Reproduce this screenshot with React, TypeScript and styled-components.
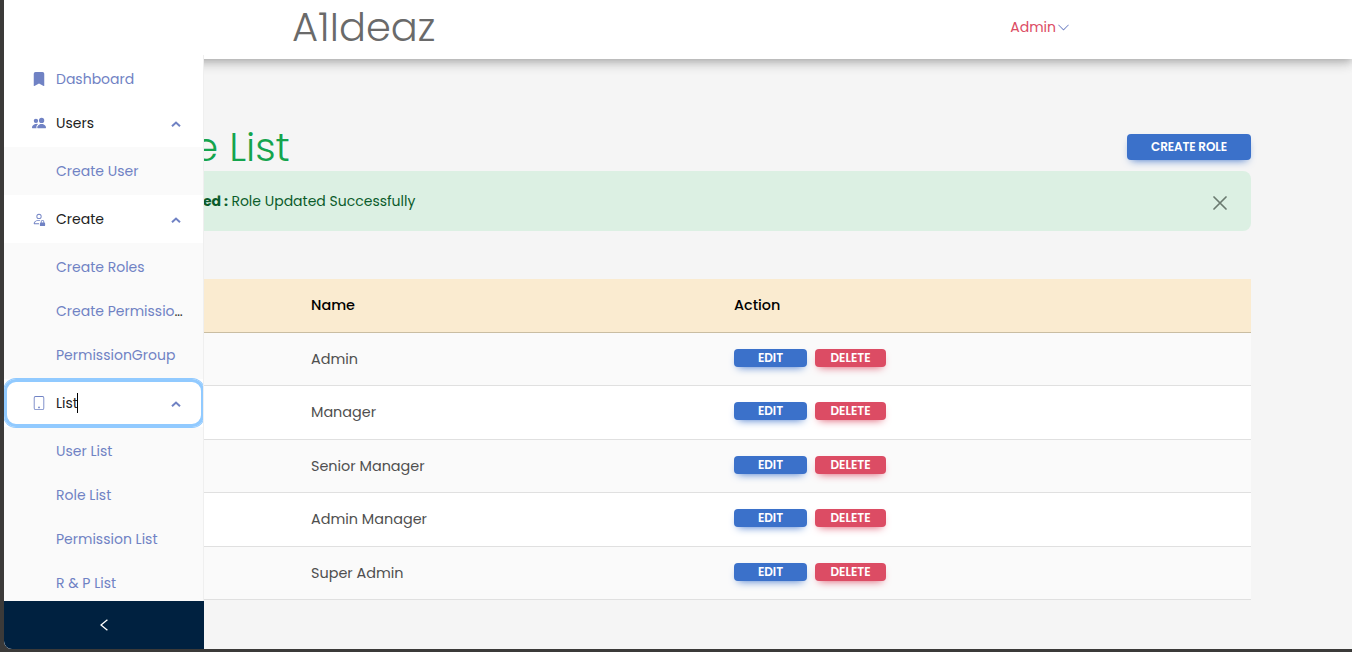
import React from "react";
import styled, { createGlobalStyle, css } from "styled-components";
import { BsBookmarkFill, BsPeopleFill, BsPersonLock, BsTablet, BsChevronDown } from "react-icons/bs";

const GlobalStyle = createGlobalStyle`
  * { box-sizing: border-box; }
  body {
    margin: 0;
    overflow: hidden;
    background: #3b3a39;
    font-family: Poppins, Inter, "Open Sans", sans-serif;
    font-size: 14px;
    color: #4f4f4f;
  }
`;

const Frame = styled.div`
  height: 652px;
  padding: 0 0 3px 4px;
`;

const Screen = styled.div`
  position: relative;
  height: 649px;
  overflow: hidden;
  border-bottom-left-radius: 8px;
  background: #f5f5f5;
`;

/* Top bar */
const Header = styled.header`
  position: relative;
  display: flex;
  justify-content: space-between;
  align-items: center;
  height: 59px;
  padding: 0 282px 5px 288px;
  background: #fff;
  box-shadow: 0 3px 6px -1px rgba(0, 0, 0, 0.12), 0 5px 10px rgba(0, 0, 0, 0.12), 0 2px 15px rgba(0, 0, 0, 0.12);
`;

const Brand = styled.div`
  font-size: 40px;
  font-weight: 300;
  line-height: 48px;
  color: #6a6a6a;
`;

const Account = styled.button`
  display: flex;
  align-items: center;
  padding: 0;
  border: 0;
  background: none;
  font: inherit;
  line-height: 22px;
  color: #dc4c64;
  svg { color: #7082c4; margin-left: 1px; }
`;

/* Page body */
const Content = styled.main`
  width: 1146px;
  margin-left: 101px;
  padding-top: 64px;
`;

const TitleRow = styled.div`
  display: flex;
  justify-content: space-between;
  align-items: center;
  height: 48px;
`;

const Title = styled.h1`
  margin: 0;
  width: 184.8px;
  display: flex;
  justify-content: flex-end;
  font-size: 40px;
  font-weight: 300;
  line-height: 48px;
  white-space: nowrap;
  color: #14a44d;
`;

const Button = styled.button<{ $kind: "primary" | "danger"; $large?: boolean }>`
  display: flex;
  align-items: center;
  justify-content: center;
  padding: 0;
  border: 0;
  border-radius: 4px;
  font: inherit;
  font-size: 12px;
  font-weight: 600;
  letter-spacing: ${(p) => (p.$large ? -0.1 : 0)}px;
  white-space: nowrap;
  color: #fff;
  height: ${(p) => (p.$large ? 26 : 18)}px;
  ${(p) =>
    p.$kind === "primary"
      ? css`
          width: ${p.$large ? 124 : 73}px;
          background: #3b71ca;
          box-shadow: 0 4px 9px -4px #3b71ca;
        `
      : css`
          width: 71px;
          background: #dc4c64;
          box-shadow: 0 4px 9px -4px #dc4c64;
        `}
`;

const Alert = styled.div`
  display: flex;
  align-items: center;
  justify-content: space-between;
  height: 60px;
  padding: 0 24px 0 0;
  border-radius: 8px;
  background: #dcf0e3;
  color: #0b5c2b;
  svg { margin-top: 4px; }
`;

const AlertText = styled.div`
  display: flex;
  align-items: center;
  b { width: 123px; text-align: right; margin-right: 3.4px; }
`;

const Table = styled.div`
  margin-top: 48px;
  font-size: 14.4px;
`;

const Row = styled.div<{ $head?: boolean }>`
  display: grid;
  grid-template-columns: 182px 423px 1fr;
  align-items: center;
  height: 53.4px;
  padding-bottom: 0.4px;
  border-bottom: 1px solid #e0e0e0;
  background: #fff;
  &:nth-child(even) { background: #fafafa; }
  ${(p) =>
    p.$head &&
    css`
      height: 54px;
      padding-bottom: 2px;
      border-color: #c9bda2;
      background: #faebd0;
      color: #000;
      font-weight: 500;
    `}
`;

const Cell = styled.div`
  padding-left: 24px;
  line-height: 22px;
`;

const Actions = styled(Cell)`
  display: flex;
  gap: 8px;
  padding-bottom: 2px;
`;

/* Side menu, floating above the page */
const Sidebar = styled.aside`
  position: absolute;
  left: 0;
  top: 0;
  width: 200px;
  height: 649px;
  display: flex;
  flex-direction: column;
  background: #fff;
`;

const Menu = styled.nav`
  flex: 1;
  min-height: 0;
  overflow: hidden;
  margin-top: 55px;
  padding-top: 4px;
  border-right: 1px solid #efefef;
`;

const MenuItem = styled.a<{ $open?: boolean; $focused?: boolean }>`
  display: flex;
  align-items: center;
  height: ${(p) => (p.$open ? 48 : 40)}px;
  padding: 0 22px 0 28px;
  color: ${(p) => (p.$open ? "#212121" : "#7082c4")};
  background: #fff;
  > svg:first-child { color: #7082c4; margin-right: 10px; flex: none; }
  ${(p) =>
    p.$focused &&
    css`
      position: relative;
      width: 200px;
      margin-right: -1px;
      padding-right: 23px;
      border-radius: 12px;
      box-shadow: inset 0 0 0 3px #91caff, 0 0 0 1px #91caff;
    `}
`;

const SubMenu = styled.div`
  padding: 2px 0;
  background: #fafafa;
`;

const SubItem = styled.a`
  display: block;
  height: 44px;
  padding: 0 15px 0 52px;
  overflow: hidden;
  line-height: 44px;
  color: #7082c4;
  white-space: nowrap;
`;

const Ellipsis = styled.span`
  color: #333;
`;

const Caret = styled.i`
  width: 1px;
  height: 20px;
  margin-left: -1px;
  background: #000;
`;

const Trigger = styled.button`
  display: flex;
  align-items: center;
  justify-content: center;
  height: 48px;
  border: 0;
  padding: 0;
  background: #002140;
  color: #fff;
`;

const Arrow = styled.svg`
  margin: 1px 0 0 auto;
`;

const MenuArrow = () => (
  <Arrow width="10" height="6" viewBox="0 0 10 6" fill="none" stroke="#7082c4" strokeWidth="2">
    <path d="M1 5.2 5 1.5 9 5.2" />
  </Arrow>
);

const roles = ["Admin", "Manager", "Senior Manager", "Admin Manager", "Super Admin"];

export default function App() {
  return (
    <>
      <GlobalStyle />
      <Frame>
        <Screen>
          <Header>
            <Brand>A1Ideaz</Brand>
            <Account>Admin<BsChevronDown size={13} /></Account>
          </Header>
          <Content>
            <TitleRow>
              <Title>Role List</Title>
              <Button $kind="primary" $large>CREATE ROLE</Button>
            </TitleRow>
            <Alert>
              <AlertText><b>Updated :</b>Role Updated Successfully</AlertText>
              <svg width="14" height="14" viewBox="0 0 14 14" stroke="#6b7a70" strokeWidth="1.7" strokeLinecap="round">
                <path d="M1 1 13 13M13 1 1 13" />
              </svg>
            </Alert>
            <Table>
              <Row $head>
                <Cell />
                <Cell>Name</Cell>
                <Cell>Action</Cell>
              </Row>
              {roles.map((name) => (
                <Row key={name}>
                  <Cell />
                  <Cell>{name}</Cell>
                  <Actions>
                    <Button $kind="primary">EDIT</Button>
                    <Button $kind="danger">DELETE</Button>
                  </Actions>
                </Row>
              ))}
            </Table>
          </Content>
          <Sidebar>
            <Menu>
              <MenuItem><BsBookmarkFill size={14} />Dashboard</MenuItem>
              <MenuItem $open><BsPeopleFill size={14} />Users<MenuArrow /></MenuItem>
              <SubMenu>
                <SubItem>Create User</SubItem>
              </SubMenu>
              <MenuItem $open><BsPersonLock size={14} />Create<MenuArrow /></MenuItem>
              <SubMenu>
                <SubItem>Create Roles</SubItem>
                <SubItem>Create Permissio<Ellipsis>…</Ellipsis></SubItem>
                <SubItem>PermissionGroup</SubItem>
              </SubMenu>
              <MenuItem $open $focused><BsTablet size={14} />List<Caret /><MenuArrow /></MenuItem>
              <SubMenu>
                <SubItem>User List</SubItem>
                <SubItem>Role List</SubItem>
                <SubItem>Permission List</SubItem>
                <SubItem>R &amp; P List</SubItem>
              </SubMenu>
            </Menu>
            <Trigger>
              <svg width="8" height="12" viewBox="0 0 8 12" fill="none" stroke="currentColor" strokeWidth="1.3">
                <path d="M7.4.7 1 6l6.4 5.3" />
              </svg>
            </Trigger>
          </Sidebar>
        </Screen>
      </Frame>
    </>
  );
}
